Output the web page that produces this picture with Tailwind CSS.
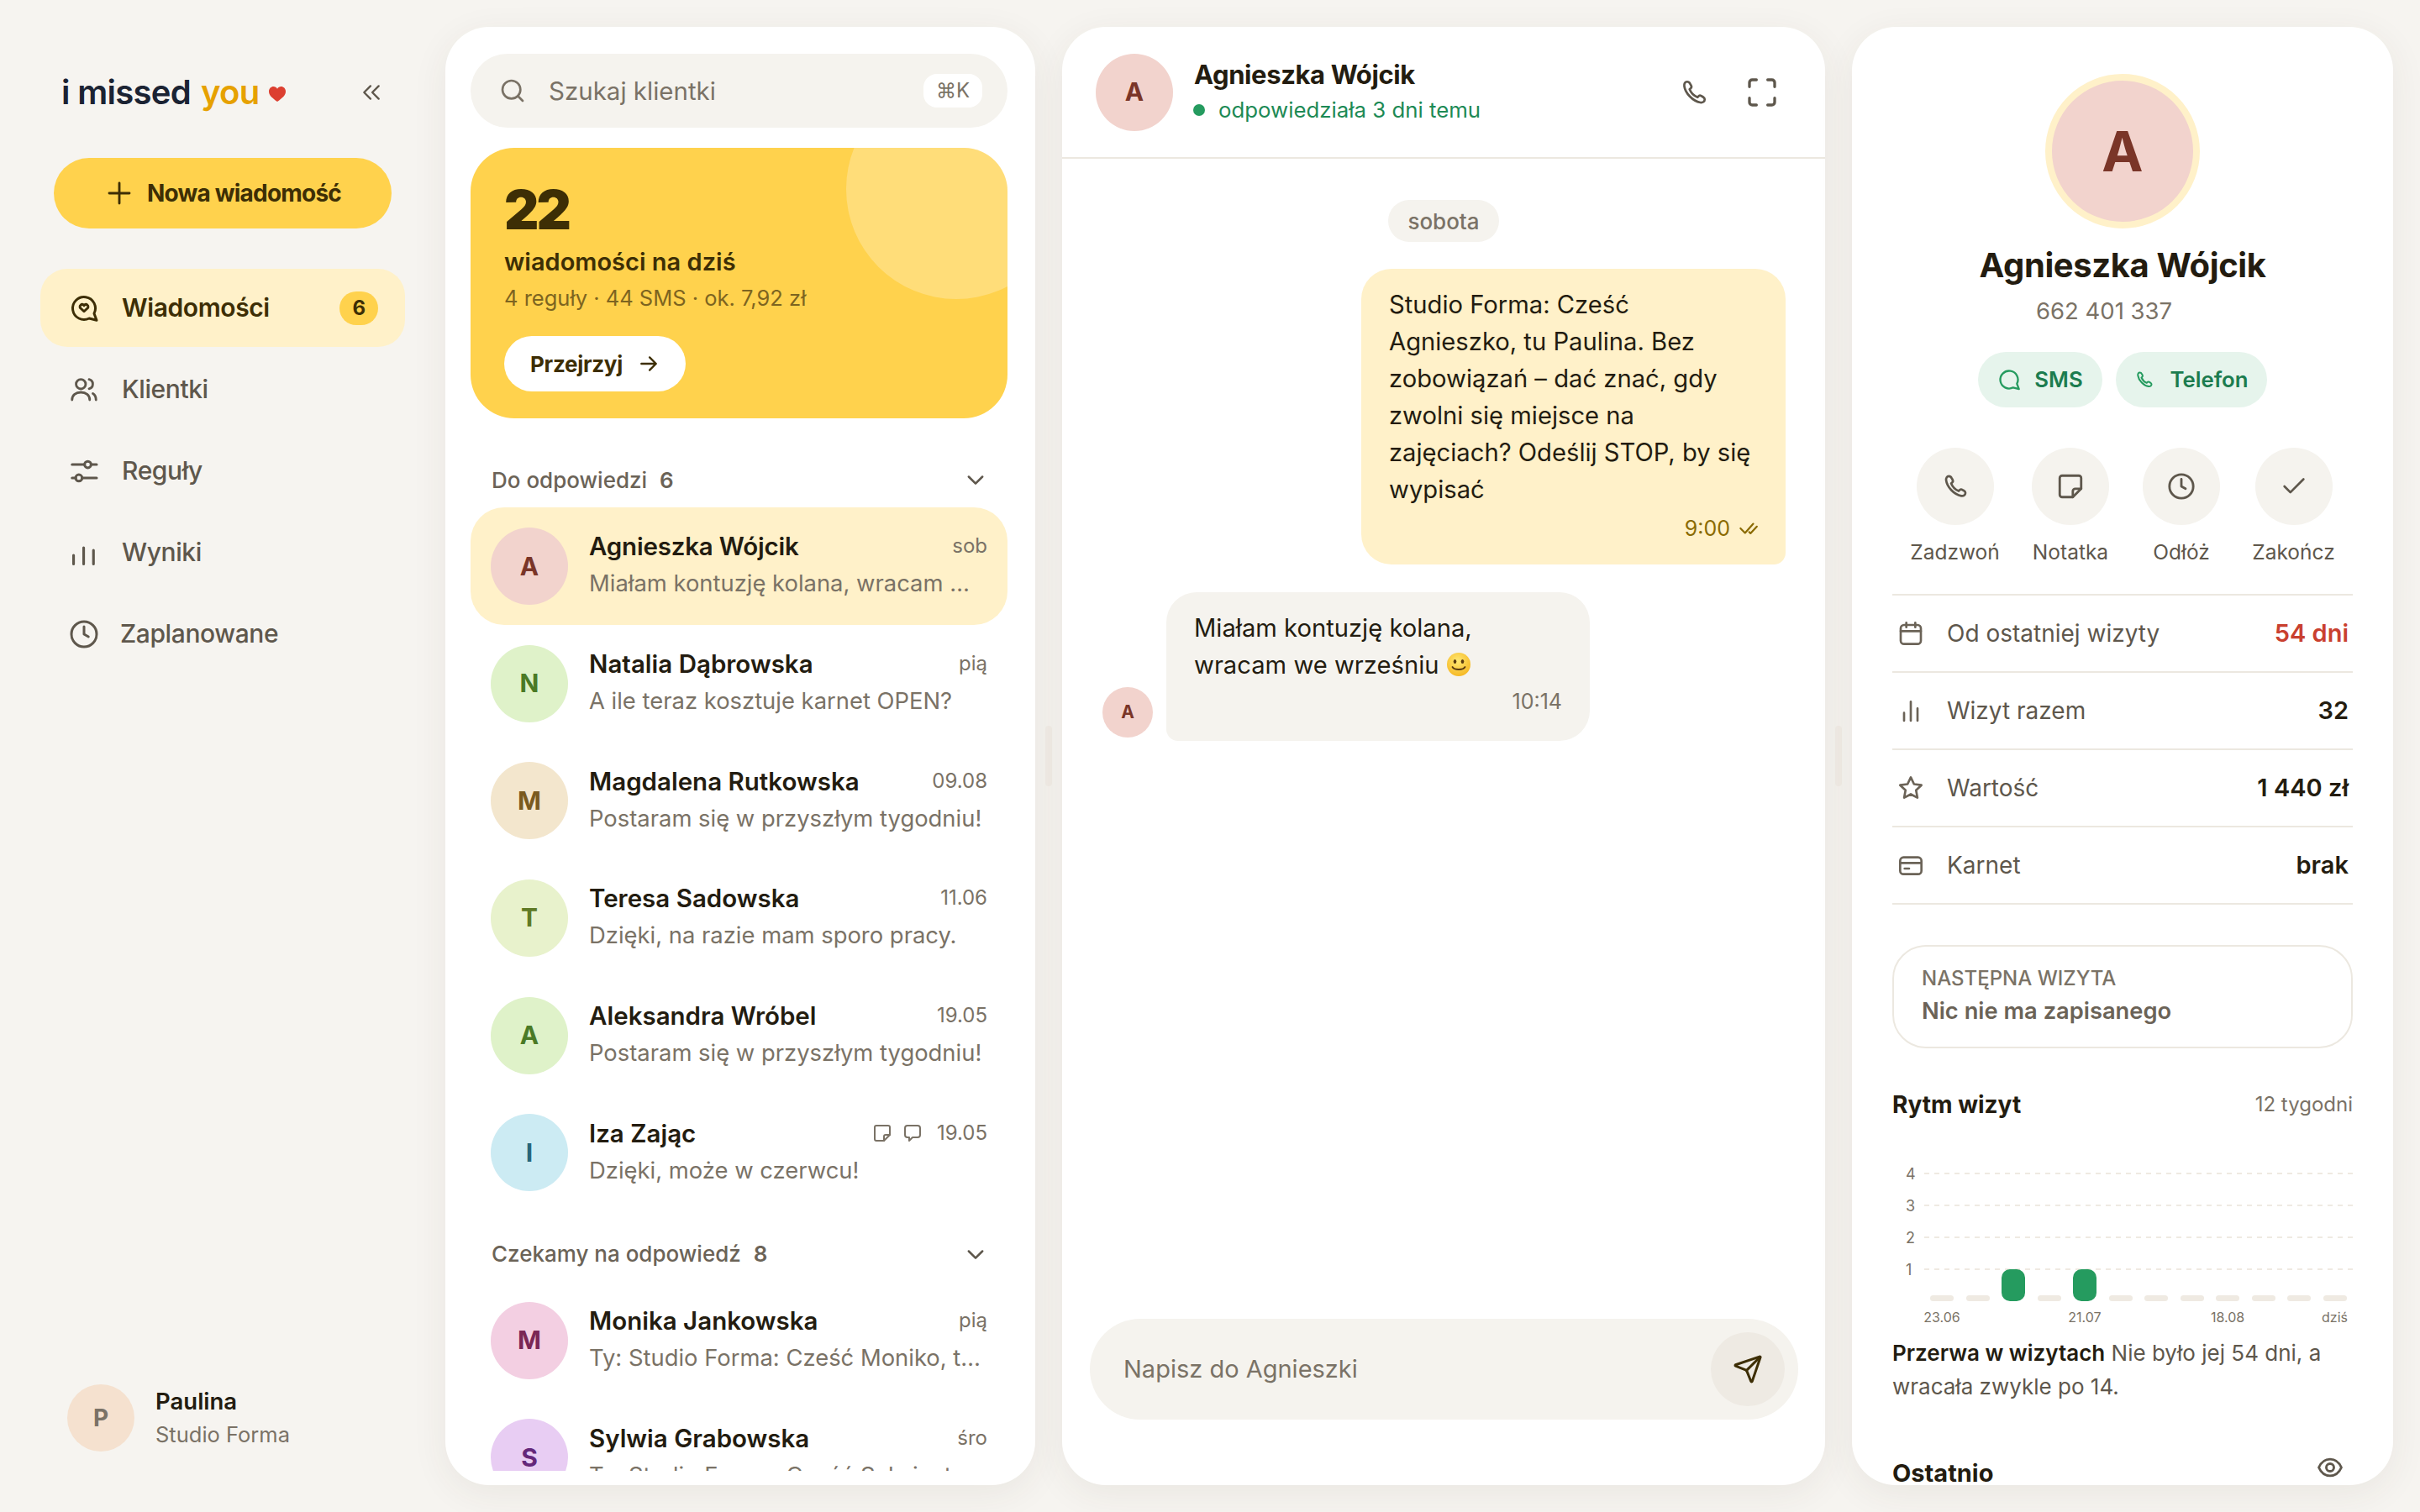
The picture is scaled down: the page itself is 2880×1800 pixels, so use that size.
<!doctype html>
<html lang="pl">
<head>
<meta charset="utf-8">
<script src="https://cdn.jsdelivr.net/npm/@tailwindcss/browser@4"></script>
<title>i missed you</title>
</head>
<body class="m-0 overflow-hidden">
<div class="flex h-[1800px] w-[2880px] bg-[#f6f4f0] py-8 pr-8 font-['Inter',sans-serif] text-[#231c10]">

  <!-- SIDEBAR -->
  <aside class="flex w-[530px] flex-none flex-col pl-[48px] pr-[48px]">
    <div class="mt-[48px] flex h-[60px] items-center justify-between pl-[25px] pr-[27px]">
      <div class="flex items-center text-[40px] font-semibold tracking-[-0.7px]">
        <span class="text-[#1b2333]">i missed</span><span class="ml-[12px] text-[#e6a100]">you</span>
        <svg class="ml-[10px] mt-[4px]" width="22" height="20" viewBox="0 0 24 22"><path fill="#dc3f30" d="M12 21C5 16 1 12.500 1 7.500 1 3.500 4 1 7 1c2 0 4 1 5 3 1-2 3-3 5-3 3 0 6 2.500 6 6.500C23 12.500 19 16 12 21Z"/></svg>
      </div>
      <svg width="26" height="26" viewBox="0 0 24 24" fill="none" stroke="#5e574c" stroke-width="2.200" stroke-linecap="round" stroke-linejoin="round"><path d="m11 19-7-7 7-7"/><path d="m20 19-7-7 7-7"/></svg>
    </div>

    <button class="ml-[16px] mt-[48px] flex h-[84px] w-[402px] flex-none items-center justify-center gap-[15px] rounded-full bg-[#ffd24d] text-[28px] font-bold tracking-[-0.8px] text-[#3d2e05]">
      <svg width="36" height="36" viewBox="0 0 24 24" fill="none" stroke="#3d2e05" stroke-width="1.900" stroke-linecap="round"><path d="M4 12h16M12 4v16"/></svg>
      <span>Nowa wiadomość</span>
    </button>

    <nav class="mt-[48px] flex flex-col gap-1 text-[30px] tracking-[-0.4px]">
      <a class="flex h-[93px] items-center rounded-[32px] bg-[#fff1c9] pl-[34px] pr-[32px] font-semibold text-[#3d2e05]">
        <svg class="mr-[27px] flex-none" width="36" height="36" viewBox="0 0 24 24" fill="none" stroke="#3d2e05" stroke-width="2" stroke-linecap="round" stroke-linejoin="round"><path d="M16.100 20A9 9 0 1 1 20 16.100L22 21.500Z"/><path d="M12 14.500 9.300 12a1.700 1.700 0 0 1 0-2.500 1.700 1.700 0 0 1 2.400 0l.3.300.3-.300a1.700 1.700 0 0 1 2.400 0 1.700 1.700 0 0 1 0 2.500Z"/></svg>
        <span>Wiadomości</span>
        <span class="ml-auto flex h-[40px] w-[46px] items-center justify-center rounded-full bg-[#ffd24d] text-[24px] font-bold">6</span>
      </a>
      <a class="flex h-[93px] items-center pl-[34px] font-medium text-[#5e574c]">
        <svg class="mr-[27px] flex-none" width="36" height="36" viewBox="0 0 24 24" fill="none" stroke="#5e574c" stroke-width="1.900" stroke-linecap="round" stroke-linejoin="round"><circle cx="9.500" cy="7.500" r="3.800"/><path d="M2.500 20c0-3.700 3-6 7-6s7 2.300 7 6"/><path d="M16 3.800a3.800 3.800 0 0 1 0 7.400"/><path d="M19 15c1.500.9 2.500 2.700 2.500 5"/></svg>
        <span>Klientki</span>
      </a>
      <a class="flex h-[93px] items-center pl-[34px] font-medium text-[#5e574c]">
        <svg class="mr-[27px] flex-none" width="36" height="36" viewBox="0 0 24 24" fill="none" stroke="#5e574c" stroke-width="2" stroke-linecap="round"><path d="M2.500 6.700h10M17.700 6.700H22M2.500 17.300h3M10.300 17.300H22"/><circle cx="15" cy="6.700" r="2.600"/><circle cx="7.900" cy="17.300" r="2.600"/></svg>
        <span>Reguły</span>
      </a>
      <a class="flex h-[93px] items-center pl-[34px] font-medium text-[#5e574c]">
        <svg class="mr-[27px] flex-none" width="36" height="36" viewBox="0 0 24 24" fill="none" stroke="#5e574c" stroke-width="2.100" stroke-linecap="round"><path d="M3.700 21v-7M11.700 21V8M19.500 21V10"/></svg>
        <span>Wyniki</span>
      </a>
      <a class="flex h-[93px] items-center pl-[34px] font-medium text-[#5e574c]">
        <svg class="mr-[25px] flex-none" width="36" height="36" viewBox="0 0 24 24" fill="none" stroke="#5e574c" stroke-width="2" stroke-linecap="round" stroke-linejoin="round"><circle cx="12" cy="12" r="10"/><path d="M12 6v6l3.500 2"/></svg>
        <span>Zaplanowane</span>
      </a>
    </nav>

    <div class="mt-auto mb-[40px] ml-[32px] flex items-center gap-[25px]">
      <div class="flex h-[80px] w-[80px] items-center justify-center rounded-full bg-[#f5e1cf] text-[28px] font-bold text-[#7a7266]">P</div>
      <div>
        <div class="text-[27.500px] font-semibold leading-[40px]">Paulina</div>
        <div class="text-[25.500px] leading-[40px] text-[#7a7266]">Studio Forma</div>
      </div>
    </div>
  </aside>

  <!-- LIST -->
  <section class="flex w-[702px] flex-none flex-col overflow-hidden rounded-[52px] bg-white pb-[17px] pl-[30px] pr-[33px] pt-[32px] shadow-[0_10px_44px_rgba(70,60,40,0.07)]">
    <div class="flex h-[88px] flex-none items-center rounded-full bg-[#f5f3ee] pl-[34px] pr-[30px]">
      <svg class="mr-[27px] flex-none" width="32" height="32" viewBox="0 0 24 24" fill="none" stroke="#7a7266" stroke-width="2" stroke-linecap="round"><circle cx="11" cy="11" r="8"/><path d="m21 21-4.300-4.300"/></svg>
      <span class="text-[29.500px] text-[#7a7266]">Szukaj klientki</span>
      <span class="ml-auto flex h-[40px] w-[70px] items-center justify-center rounded-[16px] bg-white text-[24px] text-[#7a7266]">⌘K</span>
    </div>

    <div class="relative mt-[24px] h-[322px] flex-none overflow-hidden rounded-[52px] bg-[#ffd24d] pl-[40px] pt-[38px]">
      <div class="absolute left-[447px] top-[-82px] h-[262px] w-[262px] rounded-full bg-white/25"></div>
      <div class="relative text-[64px] font-black leading-[72px] tracking-[-3px] text-[#3d2e05]">22</div>
      <div class="relative mt-[4px] text-[29px] font-semibold leading-[44px] text-[#3d2e05]">wiadomości na dziś</div>
      <div class="relative text-[25.500px] leading-[42px] text-[#7d6420]">4 reguły · 44 SMS · ok. 7,92 zł</div>
      <button class="relative mt-[24px] flex h-[66px] w-[216px] items-center justify-center gap-[18px] rounded-full bg-white text-[26px] font-bold tracking-[-0.3px] text-[#3d2e05]">
        <span>Przejrzyj</span>
        <svg width="26" height="26" viewBox="0 0 24 24" fill="none" stroke="#3d2e05" stroke-width="2.200" stroke-linecap="round" stroke-linejoin="round"><path d="M4 12h16M13 5l7 7-7 7"/></svg>
      </button>
    </div>

    <div class="min-h-0 flex-1 overflow-hidden">
      <div class="mt-[53px] flex h-[40px] items-center pl-[25px] pr-[24px] text-[26px] font-medium text-[#6b6357]">
        <span>Do odpowiedzi</span><span class="ml-[15px] font-semibold">6</span>
        <svg class="ml-auto" width="28" height="28" viewBox="0 0 24 24" fill="none" stroke="#5e574c" stroke-width="2.200" stroke-linecap="round" stroke-linejoin="round"><path d="m5 9 7 7 7-7"/></svg>
      </div>
      <div class="mt-[13px] flex flex-col">
        <a class="flex h-[140px] items-center gap-[25px] rounded-[40px] bg-[#fff1c9] px-[24px]">
          <div class="flex h-[92px] w-[92px] flex-none items-center justify-center rounded-full bg-[#f2d3cd] text-[30px] font-bold text-[#7a3528]">A</div>
          <div class="-mt-[4px] min-w-0 flex-1">
            <div class="flex items-center justify-between leading-[44px]"><span class="text-[29.500px] font-semibold tracking-[-0.2px]">Agnieszka Wójcik</span><span class="text-[24px] text-[#7a7266]">sob</span></div>
            <div class="truncate text-[27.400px] leading-[44px] text-[#7a7266]">Miałam kontuzję kolana, wracam we wrześniu</div>
          </div>
        </a>
        <a class="flex h-[139.6px] items-center gap-[25px] px-[24px]">
          <div class="flex h-[92px] w-[92px] flex-none items-center justify-center rounded-full bg-[#dff2c9] text-[30px] font-bold text-[#4a7a26]">N</div>
          <div class="-mt-[3px] min-w-0 flex-1">
            <div class="flex items-center justify-between leading-[44px]"><span class="text-[29.500px] font-semibold">Natalia Dąbrowska</span><span class="text-[24px] text-[#7a7266]">pią</span></div>
            <div class="truncate text-[27.400px] leading-[44px] text-[#7a7266]">A ile teraz kosztuje karnet OPEN?</div>
          </div>
        </a>
        <a class="flex h-[139.6px] items-center gap-[25px] px-[24px]">
          <div class="flex h-[92px] w-[92px] flex-none items-center justify-center rounded-full bg-[#f3e6cd] text-[30px] font-bold text-[#7a5a1e]">M</div>
          <div class="-mt-[3px] min-w-0 flex-1">
            <div class="flex items-center justify-between leading-[44px]"><span class="text-[29.500px] font-semibold">Magdalena Rutkowska</span><span class="text-[24px] text-[#7a7266]">09.08</span></div>
            <div class="truncate text-[27.400px] leading-[44px] text-[#7a7266]">Postaram się w przyszłym tygodniu!</div>
          </div>
        </a>
        <a class="flex h-[139.6px] items-center gap-[25px] px-[24px]">
          <div class="flex h-[92px] w-[92px] flex-none items-center justify-center rounded-full bg-[#e8f2cc] text-[30px] font-bold text-[#5f7a26]">T</div>
          <div class="-mt-[3px] min-w-0 flex-1">
            <div class="flex items-center justify-between leading-[44px]"><span class="text-[29.500px] font-semibold">Teresa Sadowska</span><span class="text-[24px] text-[#7a7266]">11.06</span></div>
            <div class="truncate text-[27.400px] leading-[44px] text-[#7a7266]">Dzięki, na razie mam sporo pracy.</div>
          </div>
        </a>
        <a class="flex h-[139.6px] items-center gap-[25px] px-[24px]">
          <div class="flex h-[92px] w-[92px] flex-none items-center justify-center rounded-full bg-[#dff2c9] text-[30px] font-bold text-[#4a7a26]">A</div>
          <div class="-mt-[3px] min-w-0 flex-1">
            <div class="flex items-center justify-between leading-[44px]"><span class="text-[29.500px] font-semibold">Aleksandra Wróbel</span><span class="text-[24px] text-[#7a7266]">19.05</span></div>
            <div class="truncate text-[27.400px] leading-[44px] text-[#7a7266]">Postaram się w przyszłym tygodniu!</div>
          </div>
        </a>
        <a class="flex h-[139.6px] items-center gap-[25px] px-[24px]">
          <div class="flex h-[92px] w-[92px] flex-none items-center justify-center rounded-full bg-[#ccebf3] text-[30px] font-bold text-[#27657a]">I</div>
          <div class="-mt-[3px] min-w-0 flex-1">
            <div class="flex items-center leading-[44px]"><span class="text-[29.500px] font-semibold">Iza Zając</span>
              <svg class="ml-auto" width="24" height="24" viewBox="0 0 24 24" fill="none" stroke="#7a7266" stroke-width="2" stroke-linecap="round" stroke-linejoin="round"><path d="M5 3h14a2 2 0 0 1 2 2v9l-7 7H5a2 2 0 0 1-2-2V5a2 2 0 0 1 2-2Z"/><path d="M14 21v-5a2 2 0 0 1 2-2h5"/></svg>
              <svg class="ml-[12px]" width="24" height="24" viewBox="0 0 24 24" fill="none" stroke="#7a7266" stroke-width="2" stroke-linecap="round" stroke-linejoin="round"><path d="M6 3h12a3 3 0 0 1 3 3v8a3 3 0 0 1-3 3h-6l-4 4v-4H6a3 3 0 0 1-3-3V6a3 3 0 0 1 3-3Z"/></svg>
              <span class="ml-[17px] text-[24px] text-[#7a7266]">19.05</span></div>
            <div class="truncate text-[27.400px] leading-[44px] text-[#7a7266]">Dzięki, może w czerwcu!</div>
          </div>
        </a>
      </div>
      <div class="mt-[31px] flex h-[40px] items-center pl-[25px] pr-[24px] text-[26px] font-medium text-[#6b6357]">
        <span>Czekamy na odpowiedź</span><span class="ml-[15px] font-semibold">8</span>
        <svg class="ml-auto" width="28" height="28" viewBox="0 0 24 24" fill="none" stroke="#5e574c" stroke-width="2.200" stroke-linecap="round" stroke-linejoin="round"><path d="m5 9 7 7 7-7"/></svg>
      </div>
      <div class="mt-[13px] flex flex-col">
        <a class="flex h-[139.6px] items-center gap-[25px] px-[24px]">
          <div class="flex h-[92px] w-[92px] flex-none items-center justify-center rounded-full bg-[#f3cfe2] text-[30px] font-bold text-[#7a2755]">M</div>
          <div class="-mt-[3px] min-w-0 flex-1">
            <div class="flex items-center justify-between leading-[44px]"><span class="text-[29.500px] font-semibold">Monika Jankowska</span><span class="text-[24px] text-[#7a7266]">pią</span></div>
            <div class="truncate text-[27.400px] leading-[44px] text-[#7a7266]">Ty: Studio Forma: Cześć Moniko, tu Paulina</div>
          </div>
        </a>
        <a class="flex h-[139.6px] items-center gap-[25px] px-[24px]">
          <div class="flex h-[92px] w-[92px] flex-none items-center justify-center rounded-full bg-[#e8cdf3] text-[30px] font-bold text-[#64277a]">S</div>
          <div class="-mt-[3px] min-w-0 flex-1">
            <div class="flex items-center justify-between leading-[44px]"><span class="text-[29.500px] font-semibold">Sylwia Grabowska</span><span class="text-[24px] text-[#7a7266]">śro</span></div>
            <div class="truncate text-[27.400px] leading-[44px] text-[#7a7266]">Ty: Studio Forma: Cześć Sylwia, tu Paulina</div>
          </div>
        </a>
      </div>
    </div>
  </section>

  <div class="flex w-8 flex-none items-center justify-center"><div class="h-[72px] w-[8px] rounded-full bg-[#efeae4]"></div></div>

  <!-- CHAT -->
  <section class="flex w-[908px] flex-none flex-col overflow-hidden rounded-[52px] bg-white shadow-[0_10px_44px_rgba(70,60,40,0.07)]">
    <header class="flex h-[157px] flex-none items-center border-b-2 border-[#ece8e0] pl-[40px] pr-[55px]">
      <div class="flex h-[92px] w-[92px] flex-none items-center justify-center rounded-full bg-[#f2d3cd] text-[30px] font-bold text-[#7a3528]">A</div>
      <div class="-mt-[3px] ml-[25px]">
        <div class="text-[31px] font-bold leading-[46px] tracking-[-0.4px]">Agnieszka Wójcik</div>
        <div class="flex items-center text-[25.800px] leading-[38px] text-[#1d8a55]"><span class="-ml-[1px] mr-[16px] h-[14px] w-[14px] rounded-full bg-[#259b5f]"></span>odpowiedziała 3 dni temu</div>
      </div>
      <svg class="ml-auto" width="36" height="36" viewBox="0 0 24 24" fill="none" stroke="#5e574c" stroke-width="1.800" stroke-linejoin="round"><path d="M6.500 3.500C5 3.500 4 5 4.300 7 5 12.500 11 19 17 20c2 .3 3.500-.8 3.500-2.500 0-1-.7-1.500-1.500-2l-1.500-.8c-.8-.4-1.500-.2-2.100.5l-.6.700C12.200 14.800 9.600 12.200 8.500 9.500l.8-.7c.7-.6.900-1.300.5-2.100L9 5.200C8.500 4.200 7.700 3.500 6.500 3.500Z"/></svg>
      <svg class="ml-[43px]" width="40" height="40" viewBox="0 0 24 24" fill="none" stroke="#5e574c" stroke-width="2" stroke-linecap="round" stroke-linejoin="round"><path d="M8 3H5a2 2 0 0 0-2 2v3"/><path d="M21 8V5a2 2 0 0 0-2-2h-3"/><path d="M3 16v3a2 2 0 0 0 2 2h3"/><path d="M16 21h3a2 2 0 0 0 2-2v-3"/></svg>
    </header>

    <div class="min-h-0 flex-1 overflow-hidden">
      <div class="mt-[49px] flex justify-center"><span class="flex h-[50px] w-[132px] items-center justify-center rounded-full bg-[#f5f3ee] text-[26px] font-medium text-[#7a7266]">sobota</span></div>
      <div class="mt-[32px] flex justify-end pr-[47px]">
        <div class="h-[352px] w-[505px] rounded-[36px] rounded-br-[14px] bg-[#fff1c9] pl-[33px] pr-[20px] pt-[21px] text-[29.200px] leading-[44px]">
          Studio Forma: Cześć<br>Agnieszko, tu Paulina. Bez<br>zobowiązań – dać znać, gdy<br>zwolni się miejsce na<br>zajęciach? Odeślij STOP, by się<br>wypisać
          <div class="mt-[6px] flex items-center justify-end pr-[12px] text-[25px] leading-[36px] text-[#8a6a00]">9:00
            <svg class="ml-[8px]" width="26" height="26" viewBox="0 0 24 24" fill="none" stroke="#8a6a00" stroke-width="2" stroke-linecap="round" stroke-linejoin="round"><path d="M18 7 9 17l-5-5"/><path d="m22 10-7 7.500-1.500-1.500"/></svg>
          </div>
        </div>
      </div>
      <div class="mt-[33px] flex items-end gap-[16px] pl-[48px]">
        <div class="mb-[4px] flex h-[60px] w-[60px] flex-none items-center justify-center rounded-full bg-[#f2d3cd] text-[21px] font-bold text-[#7a3528]">A</div>
        <div class="h-[177px] w-[504px] rounded-[36px] rounded-bl-[14px] bg-[#f5f3ee] pl-[33px] pr-[33px] pt-[21px] text-[29.200px] leading-[44px]">
          Miałam kontuzję kolana,<br>wracam we wrześniu
          <svg class="inline-block align-[-4px]" width="30" height="30" viewBox="0 0 30 30"><defs><radialGradient id="em" cx="45%" cy="35%" r="70%"><stop offset="0" stop-color="#ffe873"/><stop offset="1" stop-color="#f5b51f"/></radialGradient></defs><circle cx="15" cy="15" r="14" fill="url(#em)"/><ellipse cx="10.500" cy="11.500" rx="1.800" ry="2.600" fill="#5a3a10"/><ellipse cx="19.500" cy="11.500" rx="1.800" ry="2.600" fill="#5a3a10"/><path d="M7.500 18c2 4 13 4 15 0" fill="none" stroke="#5a3a10" stroke-width="1.800" stroke-linecap="round"/></svg>
          <div class="mt-[3px] text-right text-[25px] leading-[36px] text-[#7a7266]">10:14</div>
        </div>
      </div>
    </div>

    <div class="flex-none pb-[78px] pl-[33px] pr-[32px]">
      <div class="flex h-[120px] items-center rounded-full bg-[#f5f3ee] pl-[40px] pr-[16px]">
        <span class="text-[29px] text-[#7a7266]">Napisz do Agnieszki</span>
        <span class="ml-auto flex h-[88px] w-[88px] items-center justify-center rounded-full bg-[#eeeae3]">
          <svg width="36" height="36" viewBox="0 0 24 24" fill="none" stroke="#3d2e05" stroke-width="2" stroke-linecap="round" stroke-linejoin="round"><path d="M14.536 21.686a.5.5 0 0 0 .937-.024l6.500-19a.496.496 0 0 0-.635-.635l-19 6.500a.5.5 0 0 0-.024.937l7.930 3.180a2 2 0 0 1 1.112 1.110z"/><path d="m21.854 2.147-10.940 10.939"/></svg>
        </span>
      </div>
    </div>
  </section>

  <div class="flex w-8 flex-none items-center justify-center"><div class="h-[72px] w-[8px] rounded-full bg-[#efeae4]"></div></div>

  <!-- PROFILE -->
  <section class="w-[644px] flex-none overflow-hidden rounded-[52px] bg-white shadow-[0_10px_44px_rgba(70,60,40,0.07)]">
    <div class="px-[48px] pt-[56px]">
      <div class="flex justify-center">
        <div class="flex h-[184px] w-[184px] items-center justify-center rounded-full border-[8px] border-[#fff1c9] bg-[#f2d3cd] text-[66px] font-bold text-[#7a3528]">A</div>
      </div>
      <div class="mt-[18px] text-center text-[40px] font-bold leading-[52px] tracking-[-0.4px]">Agnieszka Wójcik</div>
      <div class="mt-[8px] pr-[44px] text-center text-[27.500px] leading-[40px] text-[#7a7266]">662 401 337</div>
      <div class="mt-[29px] flex justify-center gap-[16px]">
        <span class="flex h-[66px] w-[148px] items-center justify-center gap-[16px] rounded-full bg-[#e6f4ec] text-[25.800px] font-semibold text-[#1c7c4f]">
          <svg width="28" height="28" viewBox="0 0 24 24" fill="none" stroke="#259b5f" stroke-width="2" stroke-linecap="round" stroke-linejoin="round"><path d="M16.100 20A9 9 0 1 1 20 16.100L22 21.500Z"/></svg>SMS</span>
        <span class="flex h-[66px] w-[180px] items-center justify-center gap-[18px] rounded-full bg-[#e6f4ec] text-[25.800px] font-semibold text-[#1c7c4f]">
          <svg width="24" height="24" viewBox="0 0 24 24" fill="none" stroke="#259b5f" stroke-width="2" stroke-linejoin="round"><path d="M6.500 3.500C5 3.500 4 5 4.300 7 5 12.500 11 19 17 20c2 .3 3.500-.8 3.500-2.500 0-1-.7-1.500-1.500-2l-1.500-.8c-.8-.4-1.500-.2-2.100.5l-.6.700C12.200 14.800 9.600 12.200 8.500 9.500l.8-.7c.7-.6.900-1.300.5-2.100L9 5.200C8.500 4.200 7.700 3.500 6.500 3.500Z"/></svg>Telefon</span>
      </div>
      <div class="mt-[48px] flex justify-center gap-10 text-center text-[24.500px] leading-[40px] text-[#5e574c]">
        <div class="flex w-[103px] flex-col items-center"><span class="flex h-[92px] w-[92px] items-center justify-center rounded-full bg-[#f5f3ee]"><svg width="34" height="34" viewBox="0 0 24 24" fill="none" stroke="#5e574c" stroke-width="1.900" stroke-linejoin="round"><path d="M6.500 3.500C5 3.500 4 5 4.300 7 5 12.500 11 19 17 20c2 .3 3.500-.8 3.500-2.500 0-1-.7-1.500-1.500-2l-1.500-.8c-.8-.4-1.500-.2-2.100.5l-.6.700C12.200 14.800 9.600 12.200 8.500 9.500l.8-.7c.7-.6.900-1.300.5-2.100L9 5.200C8.500 4.200 7.700 3.500 6.500 3.500Z"/></svg></span><span class="mt-[12px] whitespace-nowrap">Zadzwoń</span></div>
        <div class="flex w-[92px] flex-col items-center"><span class="flex h-[92px] w-[92px] items-center justify-center rounded-full bg-[#f5f3ee]"><svg width="34" height="34" viewBox="0 0 24 24" fill="none" stroke="#5e574c" stroke-width="2" stroke-linecap="round" stroke-linejoin="round"><path d="M5 3h14a2 2 0 0 1 2 2v9l-7 7H5a2 2 0 0 1-2-2V5a2 2 0 0 1 2-2Z"/><path d="M14 21v-5a2 2 0 0 1 2-2h5"/></svg></span><span class="mt-[12px] whitespace-nowrap">Notatka</span></div>
        <div class="flex w-[92px] flex-col items-center"><span class="flex h-[92px] w-[92px] items-center justify-center rounded-full bg-[#f5f3ee]"><svg width="34" height="34" viewBox="0 0 24 24" fill="none" stroke="#5e574c" stroke-width="2" stroke-linecap="round" stroke-linejoin="round"><circle cx="12" cy="12" r="10"/><path d="M12 6v6l3.500 2"/></svg></span><span class="mt-[12px] whitespace-nowrap">Odłóż</span></div>
        <div class="flex w-[95px] flex-col items-center"><span class="flex h-[92px] w-[92px] items-center justify-center rounded-full bg-[#f5f3ee]"><svg width="34" height="34" viewBox="0 0 24 24" fill="none" stroke="#5e574c" stroke-width="1.900" stroke-linecap="round" stroke-linejoin="round"><path d="M20 6 9 17l-5-5"/></svg></span><span class="mt-[12px] whitespace-nowrap">Zakończ</span></div>
      </div>

      <div class="mt-[30px] border-t-2 border-[#ece8e0]">
        <div class="flex h-[92px] items-center border-b-2 border-[#ece8e0] pl-[6px] pr-[5px] text-[28px] text-[#5e574c]">
          <svg class="mr-[27px] flex-none" width="32" height="32" viewBox="0 0 24 24" fill="none" stroke="#6b6357" stroke-width="2" stroke-linecap="round" stroke-linejoin="round"><rect x="3" y="4.500" width="18" height="17" rx="3"/><path d="M8 2.500v4M16 2.500v4M3 10h18"/></svg>
          <span>Od ostatniej wizyty</span><span class="ml-auto text-[29px] font-semibold text-[#c9402f]">54 dni</span>
        </div>
        <div class="flex h-[92px] items-center border-b-2 border-[#ece8e0] pl-[6px] pr-[5px] text-[28px] text-[#5e574c]">
          <svg class="mr-[27px] flex-none" width="32" height="32" viewBox="0 0 24 24" fill="none" stroke="#6b6357" stroke-width="2" stroke-linecap="round"><path d="M6 21v-7M12 21V4M18 21V10"/></svg>
          <span>Wizyt razem</span><span class="ml-auto text-[29px] font-semibold text-[#231c10]">32</span>
        </div>
        <div class="flex h-[92px] items-center border-b-2 border-[#ece8e0] pl-[6px] pr-[5px] text-[28px] text-[#5e574c]">
          <svg class="mr-[27px] flex-none" width="32" height="32" viewBox="0 0 24 24" fill="none" stroke="#6b6357" stroke-width="2" stroke-linecap="round" stroke-linejoin="round"><path d="m12 2.500 2.900 6.100 6.600.9-4.800 4.600 1.200 6.600L12 17.600l-5.900 3.100 1.200-6.600L2.500 9.500l6.600-.9Z"/></svg>
          <span>Wartość</span><span class="ml-auto text-[29px] font-semibold text-[#231c10]">1 440 zł</span>
        </div>
        <div class="flex h-[92px] items-center border-b-2 border-[#ece8e0] pl-[6px] pr-[5px] text-[28px] text-[#5e574c]">
          <svg class="mr-[27px] flex-none" width="32" height="32" viewBox="0 0 24 24" fill="none" stroke="#6b6357" stroke-width="2" stroke-linecap="round" stroke-linejoin="round"><rect x="2.500" y="5" width="19" height="15" rx="3"/><path d="M2.500 10h19M6.500 15h4"/></svg>
          <span>Karnet</span><span class="ml-auto text-[29px] font-semibold text-[#231c10]">brak</span>
        </div>
      </div>

      <div class="mt-[48px] h-[123px] rounded-[40px] border-2 border-[#ece8e0] pl-[33px] pt-[19px]">
        <div class="text-[24px] font-medium leading-[38px] text-[#7a7266]">NASTĘPNA WIZYTA</div>
        <div class="text-[27.300px] font-semibold leading-[40px] text-[#6b6357]">Nic nie ma zapisanego</div>
      </div>

      <div class="mt-[47px] flex h-[40px] items-center justify-between">
        <span class="text-[28px] font-bold">Rytm wizyt</span><span class="text-[24px] text-[#7a7266]">12 tygodni</span>
      </div>

      <div class="relative mt-[43px] h-[171px]">
        <div class="flex h-[38px] items-center text-[18px] text-[#7a7266]"><span class="w-[38px] pl-[16px]">4</span><div class="h-[2px] flex-1 bg-[repeating-linear-gradient(90deg,#efeae2_0,#efeae2_6px,transparent_6px,transparent_12px)]"></div></div>
        <div class="flex h-[38px] items-center text-[18px] text-[#7a7266]"><span class="w-[38px] pl-[16px]">3</span><div class="h-[2px] flex-1 bg-[repeating-linear-gradient(90deg,#efeae2_0,#efeae2_6px,transparent_6px,transparent_12px)]"></div></div>
        <div class="flex h-[38px] items-center text-[18px] text-[#7a7266]"><span class="w-[38px] pl-[16px]">2</span><div class="h-[2px] flex-1 bg-[repeating-linear-gradient(90deg,#efeae2_0,#efeae2_6px,transparent_6px,transparent_12px)]"></div></div>
        <div class="flex h-[38px] items-center text-[18px] text-[#7a7266]"><span class="w-[38px] pl-[16px]">1</span><div class="h-[2px] flex-1 bg-[repeating-linear-gradient(90deg,#efeae2_0,#efeae2_6px,transparent_6px,transparent_12px)]"></div></div>
        <div class="absolute bottom-0 left-[45px] right-[7.500px] grid h-[38px] grid-cols-12 items-end gap-x-[14.500px]">
          <div class="h-[7px] rounded-full bg-[#efeae2]"></div>
          <div class="h-[7px] rounded-full bg-[#efeae2]"></div>
          <div class="h-[38px] rounded-[10px] bg-[#259b5f]"></div>
          <div class="h-[7px] rounded-full bg-[#efeae2]"></div>
          <div class="h-[38px] rounded-[10px] bg-[#259b5f]"></div>
          <div class="h-[7px] rounded-full bg-[#efeae2]"></div>
          <div class="h-[7px] rounded-full bg-[#efeae2]"></div>
          <div class="h-[7px] rounded-full bg-[#efeae2]"></div>
          <div class="h-[7px] rounded-full bg-[#efeae2]"></div>
          <div class="h-[7px] rounded-full bg-[#efeae2]"></div>
          <div class="h-[7px] rounded-full bg-[#efeae2]"></div>
          <div class="h-[7px] rounded-full bg-[#efeae2]"></div>
        </div>
      </div>
      <div class="ml-[45px] mr-[7.500px] mt-[6px] grid h-[26px] grid-cols-12 gap-x-[14.500px] text-[16px] leading-[26px] text-[#7a7266]">
        <span class="flex justify-center whitespace-nowrap">23.06</span><span></span><span></span><span></span>
        <span class="flex justify-center whitespace-nowrap">21.07</span><span></span><span></span><span></span>
        <span class="flex justify-center whitespace-nowrap">18.08</span><span></span><span></span>
        <span class="flex justify-center whitespace-nowrap">dziś</span>
      </div>
      <p class="mt-[10px] text-[26px] leading-[40px] text-[#5e574c]"><span class="font-semibold text-[#231c10]">Przerwa w wizytach</span> Nie było jej 54 dni, a wracała zwykle po 14.</p>

      <div class="mt-[63px] flex items-start justify-between">
        <span class="text-[29px] font-bold leading-[40px]">Ostatnio</span>
        <svg class="mr-[10px] mt-[-4px]" width="34" height="34" viewBox="0 0 24 24" fill="none" stroke="#5e574c" stroke-width="2" stroke-linecap="round" stroke-linejoin="round"><path d="M2.500 12C4.500 7.500 8 5 12 5s7.500 2.500 9.500 7c-2 4.500-5.500 7-9.500 7s-7.500-2.500-9.500-7Z"/><circle cx="12" cy="12" r="3.200"/></svg>
      </div>
    </div>
  </section>
</div>
</body>
</html>
